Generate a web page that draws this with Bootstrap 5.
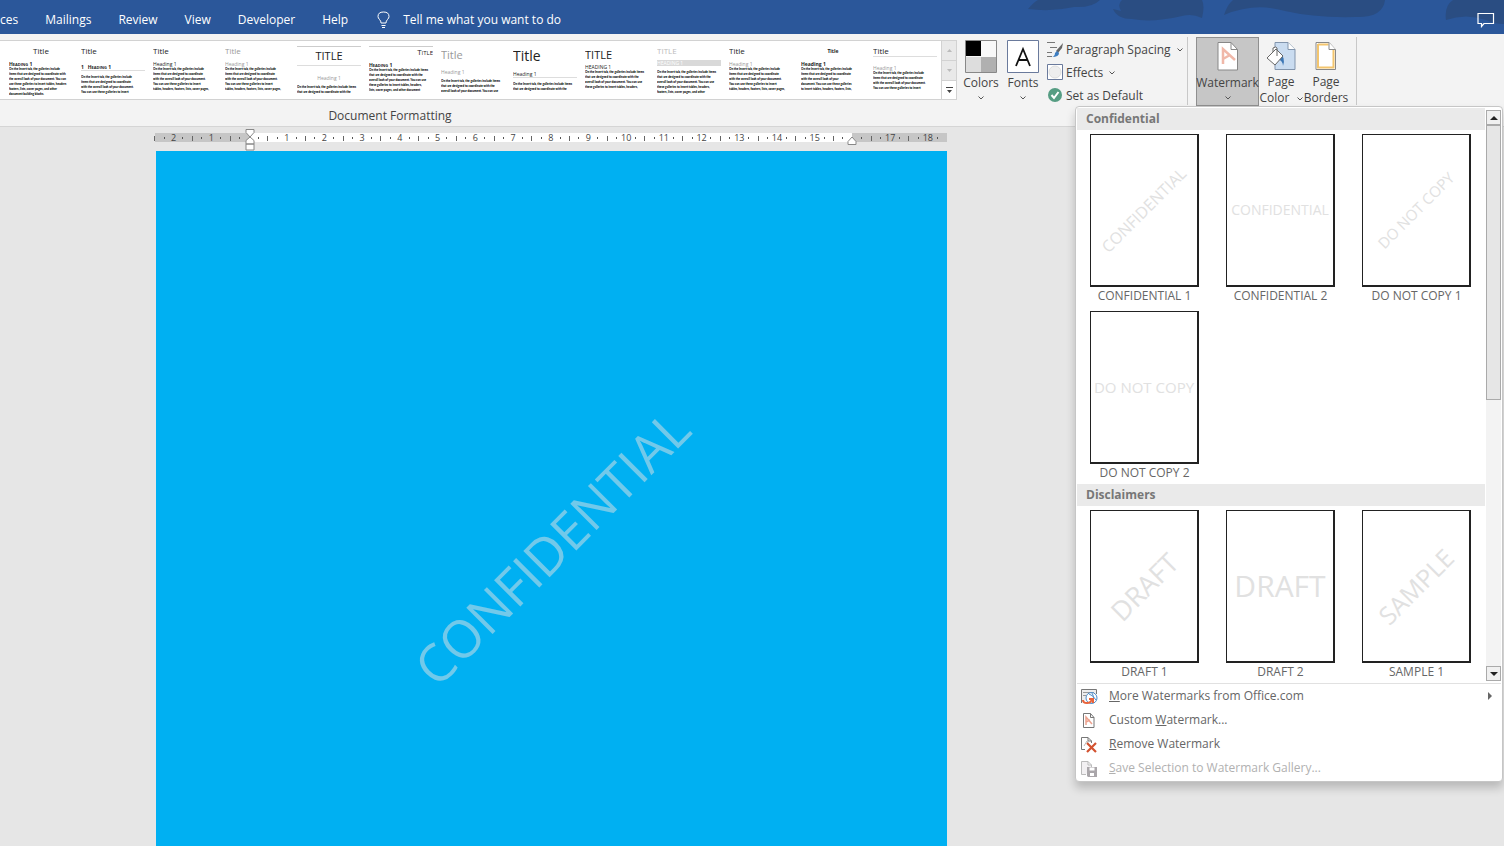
<!DOCTYPE html>
<html lang="en">
<head>
<meta charset="utf-8">
<meta name="viewport" content="width=device-width, initial-scale=1">
<title>Document - Design</title>
<link rel="stylesheet" href="https://cdn.jsdelivr.net/npm/bootstrap@5.3.0/dist/css/bootstrap.min.css">
<style>
body{font-family:"Open Sans","Noto Sans",sans-serif;font-size:12px;line-height:16px;color:#444;background:#e6e6e6;height:100vh;overflow:hidden}
button{font:inherit;color:inherit;background:none;border:0;padding:0}
svg{display:block}
.topbar{background:#2b579a;height:34px;padding-top:5px;flex:none}
.topbar .tabs{gap:27px}
.topbar a,.topbar button{color:#fff;text-decoration:none}
.topbar .art{position:absolute;right:0;top:0}
.ribbon{background:#f3f3f3;border-bottom:1px solid #d5d5d5;height:93px;z-index:5;flex:none}
.gallery{background:#fff;border:1px solid #d2d2d2;border-left:0;height:60px;margin-top:6px;padding-left:9px;gap:8px}
.fmt{width:64px;height:50px;margin-top:5px;overflow:hidden;text-align:left;color:#222;white-space:nowrap;display:flex;flex-direction:column}
.fmt .tt{display:block;font-size:8px;line-height:10px;margin-bottom:5px}
.fmt .hh{display:block;font-size:5px;line-height:6px}
.fmt .bb{display:block;font-family:Lato,sans-serif;font-size:3px;line-height:5px;font-weight:900;color:#000}
.fmt .hh,.fmt .bb{flex:none}
.fmt .big{font-size:11px;line-height:18px}
.fmt .large{font-size:14px;line-height:20px}
.pale{color:#999!important}
.rule{border-bottom:1px solid #ddd}
.ruletop{border-top:1px solid #ccc}
.sc{font-variant:small-caps}
.gscroll{width:15px;border-left:1px solid #d2d2d2;margin-left:-4px}
.gscroll button{height:20px;background:#e9e9e9;border-bottom:1px solid #d2d2d2;display:flex;align-items:center;justify-content:center}
.gscroll button:last-child{background:#fff;border:0;height:18px}
.rbtn{width:42px;padding-top:6px;height:72px;display:flex;flex-direction:column;align-items:center;flex:none}
.rbtn span{margin-top:2px;white-space:nowrap;text-align:center}
.rbtn .chev{margin-top:5px}
.rbtn.on{width:63px;height:69px;background:#c6c6c6;border:1px solid #8f8f8f;padding-top:4px}
.rbtn.on span{margin-top:4px}
.toolset{width:129px;margin:4px 11px 0 3px;flex:none}
.tool{display:flex;align-items:center;height:23px;gap:2px;white-space:nowrap}
.vsep{width:1px;height:68px;background:#c8c8c8;margin-top:3px}
.grouplabel{width:780px;text-align:center;margin-top:1px}
.desk{padding-left:155px;flex:1;min-height:0}
.sheetcol{max-width:792px;height:100%}
.ruler{height:9px;margin-top:6px;flex:none;background:linear-gradient(90deg,#c6c6c6 12%,#fff 12%,#fff 88%,#c6c6c6 88%)}
.marks{display:grid;grid-template-columns:repeat(84,minmax(0,1fr));margin-left:-5px;margin-right:5px;font-size:9px;line-height:10px}
.marks span{display:flex;justify-content:center}
.marks i{width:1px;height:5px;background:#666;margin-top:3px;flex:none}
.marks b{width:1px;height:2px;background:#555;margin-top:4px;flex:none}
.mk{position:absolute;z-index:1}
.mk.l{left:12%;margin-left:-5px;top:-4px}
.mk.r{left:88%;margin-left:-5px;top:3px}
.paper{background:#00b0f2;flex:1;min-height:0;margin:9px 0 0 1px;padding-top:366px}
.wm,.pg span{font-family:"Liberation Sans Narrow","Open Sans",sans-serif;white-space:nowrap}
.wm{transform:rotate(-45deg);font-size:52px;line-height:60px;height:60px;color:#72c9ea}
.gal{position:absolute;right:1px;top:72px;width:428px;background:#fff;border:1px solid #c6c6c6;border-radius:4px;box-shadow:0 6px 10px #0003;color:#666;padding:1px 1px 1px}
.gal h2{font-size:12px;line-height:22px;font-weight:700;background:#eaeaea;color:#777;margin:0;padding-left:9px}
.thumbs{display:grid;grid-template-columns:repeat(3,109px);column-gap:27px;row-gap:7px;padding:4px 0 3px 13px}
.thumbs button{display:block}
.pg{height:153px;border:1px solid #222;border-right-width:2px;border-bottom-width:2px;display:flex;align-items:center;justify-content:center;margin-bottom:1px}
.pg span{color:#e1e1e1;line-height:1}
.pg .diag{transform:rotate(-45deg)}
.s14{font-size:14px}.s15{font-size:15px}.s16{font-size:16px}.s25{font-size:25px}.s27{font-size:27px}.s30{font-size:30px}
.sbar{width:15px;background:#f3f3f3;margin:2px 0 2px 1px;flex:none}
.sbar button{height:15px;border:1px solid #aaa;background:#f0f0f0;display:flex;align-items:center;justify-content:center}
.thumbgrip{height:275px;background:#e6e6e6;border:1px solid #aaa}
.acts{border-top:1px solid #e1e1e1}
.acts button{display:flex;align-items:center;height:24px;width:100%;padding-left:4px;gap:11px}
.acts button:disabled{color:#b1b1b1}
</style>
</head>
<body class="d-flex flex-column">
<header class="topbar position-relative d-flex align-items-center">
  <svg class="art" width="504" height="34" fill="#2a4d82"><path d="M28 9Q34 2 38 0h62q-8 8-26 7-22 5-46 2ZM113 9l8 2Q117 4 122 0h80q3 6 0 18-10-5-20-2-30 7-50 3-15 0-19-10ZM224 15Q227 5 233 0h152q-2 18-30 17-40 1-70-6-30-9-61 4ZM446 20q-2-14 7-20h51v24q-10 0-18-4-20-7-40 0Z"/></svg>
  <nav class="tabs d-flex" aria-label="Ribbon tabs">
    <a href="#">ces</a><a href="#">Mailings</a><a href="#">Review</a><a href="#">View</a><a href="#">Developer</a><a href="#">Help</a>
  </nav>
  <button class="d-flex align-items-center position-relative" style="margin-left:29px;gap:13px"><svg width="13" height="18" fill="none" stroke="#fff"><path d="M4 12Q4 10 2.500 8.500Q1 7 1 5.500Q1 1 6.500 1T12 5.500Q12 7 10.500 8.500Q9 10 9 12ZM4.500 14.500h4M5 16.500h3"/></svg>Tell me what you want to do</button>
  <button class="ms-auto me-2 position-relative" aria-label="Comments"><svg width="20" height="16" fill="none" stroke="#fff" stroke-width="1.200"><path d="M2 1.500h15.500v10H8l-2.500 3v-3H2Z"/></svg></button>
</header>

<div class="ribbon position-relative">
  <div class="d-flex align-items-start">
    <div class="gallery d-flex">
      <button class="fmt"><span class="tt text-center">Title</span><span class="hh fw-bold sc">Heading 1</span><span class="bb">On the Insert tab, the galleries include<br>items that are designed to coordinate with<br>the overall look of your document. You can<br>use these galleries to insert tables, headers<br>footers, lists, cover pages, and other<br>document building blocks.</span></button>
      <button class="fmt"><span class="tt mb-2">Title</span><span class="hh rule fw-bold sc mb-1">1 &nbsp; Heading 1</span><span class="bb">On the Insert tab, the galleries include<br>items that are designed to coordinate<br>with the overall look of your document.<br>You can use these galleries to insert</span></button>
      <button class="fmt"><span class="tt">Title</span><span class="hh">Heading 1</span><span class="bb">On the Insert tab, the galleries include<br>items that are designed to coordinate<br>with the overall look of your document.<br>You can use these galleries to insert<br>tables, headers, footers, lists, cover pages,</span></button>
      <button class="fmt"><span class="tt pale">Title</span><span class="hh pale">Heading 1</span><span class="bb">On the Insert tab, the galleries include<br>items that are designed to coordinate<br>with the overall look of your document.<br>You can use these galleries to insert<br>tables, headers, footers, lists, cover pages,</span></button>
      <button class="fmt"><span class="tt big text-center rule ruletop">TITLE</span><span class="hh pale text-center mt-1 mb-1">Heading 1</span><span class="bb">On the Insert tab, the galleries include items<br>that are designed to coordinate with the</span></button>
      <button class="fmt"><span class="tt text-end ruletop sc">Title</span><span class="hh fw-bold sc">Heading 1</span><span class="bb">On the Insert tab, the galleries include items<br>that are designed to coordinate with the<br>overall look of your document. You can use<br>these galleries to insert tables, headers,<br>lists, cover pages, and other document</span></button>
      <button class="fmt"><span class="tt big pale">Title</span><span class="hh pale mb-1">Heading 1</span><span class="bb">On the Insert tab, the galleries include items<br>that are designed to coordinate with the<br>overall look of your document. You can use</span></button>
      <button class="fmt"><span class="tt large">Title</span><span class="hh rule mb-1">Heading 1</span><span class="bb">On the Insert tab, the galleries include items<br>that are designed to coordinate with the</span></button>
      <button class="fmt"><span class="tt big mb-0">TITLE</span><span class="hh">HEADING 1</span><span class="bb">On the Insert tab, the galleries include items<br>that are designed to coordinate with the<br>overall look of your document. You can use<br>these galleries to insert tables, headers,</span></button>
      <button class="fmt"><span class="tt mb-1" style="color:#bbb">TITLE</span><span class="hh text-white" style="background:#d9d9d9">HEADING 1</span><span class="bb mt-1">On the Insert tab, the galleries include items<br>that are designed to coordinate with the<br>overall look of your document. You can use<br>these galleries to insert tables, headers,<br>footers, lists, cover pages, and other</span></button>
      <button class="fmt"><span class="tt">Title</span><span class="hh pale">Heading 1</span><span class="bb">On the Insert tab, the galleries include<br>items that are designed to coordinate<br>with the overall look of your document.<br>You can use these galleries to insert<br>tables, headers, footers, lists, cover pages,</span></button>
      <button class="fmt"><span class="tt text-center fw-bold" style="font-size:5px">Title</span><span class="hh fw-bold">Heading 1</span><span class="bb">On the Insert tab, the galleries include<br>items that are designed to coordinate<br>with the overall look of your<br>document. You can use these galleries<br>to insert tables, headers, footers, lists,</span></button>
      <button class="fmt"><span class="tt rule mb-2">Title</span><span class="hh pale">Heading 1</span><span class="bb">On the Insert tab, the galleries include<br>items that are designed to coordinate<br>with the overall look of your document.<br>You can use these galleries to insert</span></button>
      <div class="gscroll d-flex flex-column">
        <button aria-label="Up"><svg width="5" height="3" fill="#bbb"><path d="M0 3L2.500 0 5 3Z"/></svg></button>
        <button aria-label="Down"><svg width="5" height="3" fill="#bbb"><path d="M0 0L2.500 3 5 0Z"/></svg></button>
        <button aria-label="More"><svg width="7" height="6" fill="#444"><path d="M0 0h7v1H0ZM1 3h5L3.500 6Z"/></svg></button>
      </div>
    </div>
    <button class="rbtn" style="margin-left:3px"><svg width="32" height="33"><path fill="#f8f8f8" stroke="#888" d="M.5.500h31v32H.5Z"/><path d="M1 1h15v15H1Z"/><path fill="#ddd" d="M1 17h15v15H1Z"/><path fill="#b0b0b0" d="M16 17h15v15H16Z"/></svg><span>Colors</span><svg class="chev" width="6" height="4" fill="none" stroke="#555"><path d="M.5.500L3 3 5.500.500"/></svg></button>
    <button class="rbtn"><svg width="32" height="33" fill="#fff" stroke="#6a7a9c"><path d="M.5.500h31v32H.5Z"/><path fill="none" stroke="#111" stroke-width="1.800" d="M9 26L16 9l7 17M11.500 20h9"/></svg><span>Fonts</span><svg class="chev" width="6" height="4" fill="none" stroke="#555"><path d="M.5.500L3 3 5.500.500"/></svg></button>
    <div class="toolset">
      <button class="tool"><svg width="17" height="17" fill="none"><path stroke="#777" d="M0 1.500h8M3 6.500h7M0 11.500h5M0 15.500h5"/><path fill="#666" d="M16 2l-1 5-4 5-2-2Z"/><path fill="#3d7dc0" d="M10 10l2 2q0 4-7 4 3-1 3-4Z"/></svg>Paragraph Spacing<svg class="ms-1" width="6" height="4" fill="none" stroke="#555"><path d="M.5.500L3 3 5.500.500"/></svg></button>
      <button class="tool"><svg width="17" height="17"><path fill="#fff" stroke="#6a7a9c" d="M.5.500h15v15H.5Z"/><circle cx="8" cy="8" r="6" fill="#eee" stroke="#ddd"/></svg>Effects<svg class="ms-1" width="6" height="4" fill="none" stroke="#555"><path d="M.5.500L3 3 5.500.500"/></svg></button>
      <button class="tool"><svg width="17" height="17" fill="none"><circle cx="8" cy="8" r="7" fill="#569d83"/><path stroke="#fff" stroke-width="2" d="M4.500 8l2.500 3 4.500-6"/></svg>Set as Default</button>
    </div>
    <div class="vsep"></div>
    <button class="rbtn on" style="margin:3px 1px 0 8px" aria-expanded="true"><svg width="22" height="29"><path fill="#fff" stroke="#888" d="M1 .500h13l6.500 7v20.500H1Z"/><path fill="none" stroke="#888" d="M14 .500v7h6.500"/><path fill="none" stroke="#f0b8a9" stroke-width="2.500" d="M6 22L6 7l12 11M6 17l7-4"/></svg><span>Watermark</span><svg class="chev" width="6" height="4" fill="none" stroke="#555"><path d="M.5.500L3 3 5.500.500"/></svg></button>
    <button class="rbtn"><svg width="30" height="33"><path fill="#cadcf0" stroke="#8295ad" d="M9 2.500h13l7 7v20H9Z"/><path fill="#fff" stroke="#8295ad" d="M22 2.500v7h7"/><path fill="#3d77b5" d="M13 14q7 2 4 12 0-5-5-7Z"/><path fill="#fff" stroke="#666" d="M1 18l9-9 7 7-8 9ZM7 12V8q3-2 4 0v8"/></svg><span>Page<br>Color <svg class="d-inline-block ms-1 align-middle" width="6" height="4" fill="none" stroke="#555"><path d="M.5.500L3 3 5.500.500"/></svg></span></button>
    <button class="rbtn" style="margin:0 9px 0 3px"><svg width="22" height="33"><path fill="#fff" stroke="#888" d="M1 2.500h13l6.500 7v20H1Z"/><path fill="none" stroke="#f3c56e" stroke-width="2" d="M3 4.500h10.500M3 4v23.500h15.500V10"/><path fill="#fff" stroke="#888" d="M14 2.500v7h6.500"/></svg><span>Page<br>Borders</span></button>
    <div class="vsep"></div>
  </div>
  <div class="grouplabel">Document Formatting</div>

  <section class="gal" aria-label="Watermark gallery">
    <div class="d-flex">
      <div class="flex-grow-1">
        <h2>Confidential</h2>
        <div class="thumbs">
          <button><span class="pg"><span class="diag s16">CONFIDENTIAL</span></span>CONFIDENTIAL 1</button>
          <button><span class="pg"><span class="s14">CONFIDENTIAL</span></span>CONFIDENTIAL 2</button>
          <button><span class="pg"><span class="diag s15">DO NOT COPY</span></span>DO NOT COPY 1</button>
          <button><span class="pg"><span class="s15">DO NOT COPY</span></span>DO NOT COPY 2</button>
        </div>
        <h2>Disclaimers</h2>
        <div class="thumbs">
          <button><span class="pg"><span class="diag s27">DRAFT</span></span>DRAFT 1</button>
          <button><span class="pg"><span class="s30">DRAFT</span></span>DRAFT 2</button>
          <button><span class="pg"><span class="diag s25">SAMPLE</span></span>SAMPLE 1</button>
        </div>
      </div>
      <div class="sbar d-flex flex-column">
        <button aria-label="Scroll up"><svg width="8" height="4" fill="#222"><path d="M0 4L4 0 8 4Z"/></svg></button>
        <div class="thumbgrip"></div>
        <button class="mt-auto" aria-label="Scroll down"><svg width="8" height="4" fill="#222"><path d="M0 0L4 4 8 0Z"/></svg></button>
      </div>
    </div>
    <div class="acts">
      <button><svg width="17" height="17" fill="none"><path fill="#eee" stroke="#777" d="M.5 15V1.500h15V6"/><path stroke="#999" d="M2 4.500h11M2 7.500h3"/><circle cx="10.500" cy="10" r="5.500" fill="#fff" stroke="#4e8cc8"/><path stroke="#4e8cc8" d="M8 6q4 1 7 6M10.500 4.500q4 5 0 11"/><path stroke="#e8643c" stroke-width="2" d="M2 12q0 3 4 3 4 0 5-4M8 11h4v4"/></svg><span><u>M</u>ore Watermarks from Office.com</span><svg class="ms-auto me-2" width="5" height="8" fill="#666"><path d="M0 0L4 4 0 8Z"/></svg></button>
      <button><svg width="17" height="17" fill="none"><path fill="#fff" stroke="#777" d="M2.500 1.500h7l3.500 4v10H2.500ZM9.500 1.500v4H13"/><path stroke="#eca18d" stroke-width="1.500" d="M5 13V5l6 7M5 10l4-2"/></svg><span>Custom <u>W</u>atermark...</span></button>
      <button><svg width="17" height="17" fill="none"><path stroke="#777" d="M4 13.500H.5V1.500H7l3.500 3.500v2M7 1.500V5h3.500"/><path stroke="#bbb" d="M3 10l3-5 2 4"/><path stroke="#d35230" stroke-width="2.200" d="M6 7l9 9M15 7l-9 9"/></svg><span><u>R</u>emove Watermark</span></button>
      <button disabled><svg width="17" height="17" fill="none"><path fill="#f2f0f2" stroke="#bbb" d="M5 14.500H.5V1.500H7l3.500 3.500v2M7 1.500V5h3.500"/><path fill="#aaa6aa" d="M6 7h10v10H7l-1-1Z"/><path fill="#fff" d="M8.500 7.500h5v3h-5ZM9 13h4v3H9Z"/></svg><span><u>S</u>ave Selection to Watermark Gallery...</span></button>
    </div>
  </section>
</div>

<main class="desk">
  <div class="sheetcol d-flex flex-column">
    <div class="ruler position-relative">
      <div class="marks" id="marks"></div>
      <svg class="mk l" width="10" height="22" fill="#fff" stroke="#888"><path d="M1 .500h8v3L5 8 1 3.500ZM1 15v-3.500L5 8l4 3.500V15ZM1 15h8v6H1Z"/></svg>
      <svg class="mk r" width="10" height="10" fill="#fff" stroke="#888"><path d="M1 8.500v-3L5 1l4 4.500v3Z"/></svg>
    </div>
    <div class="paper d-flex justify-content-center align-items-start"><div class="wm">CONFIDENTIAL</div></div>
  </div>
</main>
<script>
// Ruler: one centimetre per four columns - long tick, dot, number, dot
var out = '';
for (var n = -2; n <= 18; n++) {
  var label = (n === 0 || n === 16) ? '' : Math.abs(n);
  out += '<span><i></i></span><span><b></b></span><span>' + label + '</span><span><b></b></span>';
}
document.getElementById('marks').innerHTML = out;
</script>
<script src="https://cdn.jsdelivr.net/npm/bootstrap@5.3.0/dist/js/bootstrap.bundle.min.js"></script>
</body>
</html>
